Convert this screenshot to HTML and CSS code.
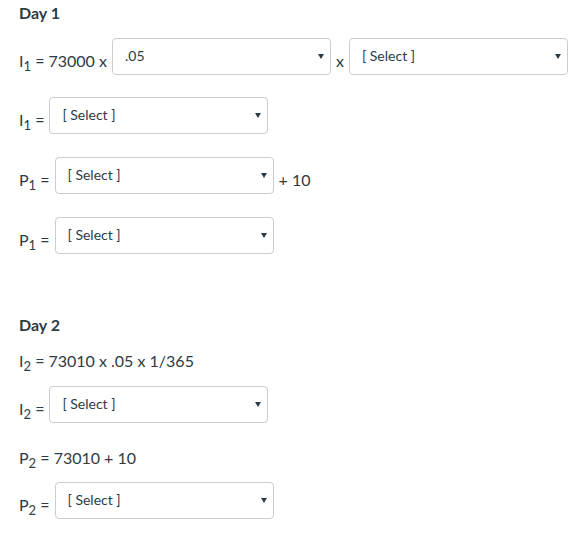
FILE: index.html
```html
<!DOCTYPE html>
<html lang="en">
<head>
<meta charset="utf-8">
<title>Interest calculation</title>
<link rel="stylesheet" href="styles.css">
</head>
<body>
<div class="page">
  <h3 class="day">Day 1</h3>

  <div class="row row-first">
    <span class="t">I<sub>1</sub> = 73000 x</span>
    <span class="sel"><select><option>.05</option></select></span>
    <span class="t">x</span>
    <span class="sel"><select><option>[ Select ]</option></select></span>
  </div>

  <div class="row row-second">
    <span class="t">I<sub>1</sub> =</span>
    <span class="sel"><select><option>[ Select ]</option></select></span>
  </div>

  <div class="row">
    <span class="t">P<sub>1</sub> =</span>
    <span class="sel"><select><option>[ Select ]</option></select></span>
    <span class="t">+ 10</span>
  </div>

  <div class="row">
    <span class="t">P<sub>1</sub> =</span>
    <span class="sel"><select><option>[ Select ]</option></select></span>
  </div>

  <h3 class="day day-second">Day 2</h3>

  <p class="line line-i2">I<sub>2</sub> = 73010 x .05 x 1/365</p>

  <div class="row row-after-line">
    <span class="t">I<sub>2</sub> =</span>
    <span class="sel"><select><option>[ Select ]</option></select></span>
  </div>

  <p class="line line-p2">P<sub>2</sub> = 73010 + 10</p>

  <div class="row row-after-line">
    <span class="t">P<sub>2</sub> =</span>
    <span class="sel"><select><option>[ Select ]</option></select></span>
  </div>
</div>
</body>
</html>
```

FILE: styles.css
```css
html, body {
  margin: 0;
  padding: 0;
  background: #ffffff;
}

body {
  font-family: Lato, "Open Sans", sans-serif;
  font-size: 16px;
  line-height: 1.2;
  color: #2d3b45;
}

.page {
  padding: 3px 0 0 19px;
}

.day {
  margin: 0;
  font-size: 16px;
  font-weight: 700;
  line-height: 1.2;
}

.day-second {
  margin-top: 61px;
}

sub {
  font-size: 13px;
  line-height: 0;
  vertical-align: -4px;
}

.row {
  display: flex;
  align-items: flex-start;
  gap: 5px;
  margin-top: 23px;
}

.row-first {
  margin-top: 16px;
}

.row-second {
  margin-top: 22px;
}

.row-after-line {
  margin-top: 15px;
}

.t {
  padding-top: 13px;
  white-space: nowrap;
}

.line {
  margin: 0;
  white-space: nowrap;
}

.line-i2 {
  margin-top: 17px;
}

.line-p2 {
  margin-top: 25px;
}

.sel {
  position: relative;
  display: block;
  width: 219px;
  height: 37px;
}

.sel select {
  -webkit-appearance: none;
  appearance: none;
  box-sizing: border-box;
  width: 100%;
  height: 100%;
  margin: 0;
  padding: 0 20px 2px 12px;
  border: 1px solid #c7cdd1;
  border-radius: 4px;
  background: #ffffff;
  font-family: Lato, "Open Sans", sans-serif;
  font-size: 14px;
  color: #2d3b45;
}

.sel::after {
  content: "";
  position: absolute;
  right: 7px;
  top: 16px;
  width: 0;
  height: 0;
  border-left: 3px solid transparent;
  border-right: 3px solid transparent;
  border-top: 5px solid #2d3b45;
  pointer-events: none;
}
```
